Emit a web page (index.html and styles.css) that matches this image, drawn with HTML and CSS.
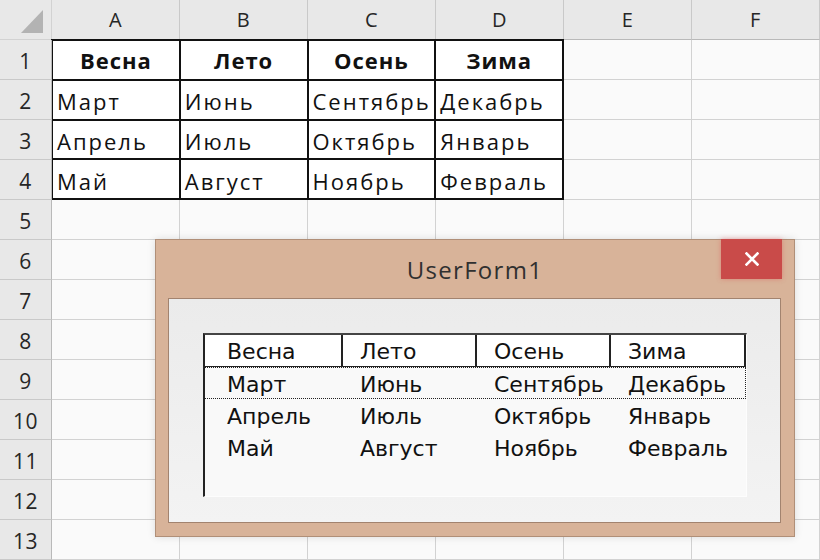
FILE: index.html
```html
<!DOCTYPE html>
<html lang="ru">
<head>
<meta charset="utf-8">
<title>UserForm1</title>
<link rel="stylesheet" href="styles.css">
</head>
<body>
<div class="sheet">
  <div class="corner"><svg width="52" height="40" viewBox="0 0 52 40"><polygon points="21,33 43,33 43,10" fill="#b3b3b3"/></svg></div>
  <div class="colh">A</div><div class="colh">B</div><div class="colh">C</div><div class="colh">D</div><div class="colh">E</div><div class="colh">F</div>

  <div class="data">
    <div class="hd">Весна</div><div class="hd">Лето</div><div class="hd">Осень</div><div class="hd">Зима</div>
    <div>Март</div><div>Июнь</div><div>Сентябрь</div><div>Декабрь</div>
    <div>Апрель</div><div>Июль</div><div>Октябрь</div><div>Январь</div>
    <div>Май</div><div>Август</div><div>Ноябрь</div><div>Февраль</div>
  </div>

  <div class="rowh">1</div><div class="cell"></div><div class="cell"></div>
  <div class="rowh">2</div><div class="cell"></div><div class="cell"></div>
  <div class="rowh">3</div><div class="cell"></div><div class="cell"></div>
  <div class="rowh">4</div><div class="cell"></div><div class="cell"></div>
  <div class="rowh">5</div><div class="cell"></div><div class="cell"></div><div class="cell"></div><div class="cell"></div><div class="cell"></div><div class="cell"></div>
  <div class="rowh">6</div><div class="cell"></div><div class="cell"></div><div class="cell"></div><div class="cell"></div><div class="cell"></div><div class="cell"></div>
  <div class="rowh">7</div><div class="cell"></div><div class="cell"></div><div class="cell"></div><div class="cell"></div><div class="cell"></div><div class="cell"></div>
  <div class="rowh">8</div><div class="cell"></div><div class="cell"></div><div class="cell"></div><div class="cell"></div><div class="cell"></div><div class="cell"></div>
  <div class="rowh">9</div><div class="cell"></div><div class="cell"></div><div class="cell"></div><div class="cell"></div><div class="cell"></div><div class="cell"></div>
  <div class="rowh">10</div><div class="cell"></div><div class="cell"></div><div class="cell"></div><div class="cell"></div><div class="cell"></div><div class="cell"></div>
  <div class="rowh">11</div><div class="cell"></div><div class="cell"></div><div class="cell"></div><div class="cell"></div><div class="cell"></div><div class="cell"></div>
  <div class="rowh">12</div><div class="cell"></div><div class="cell"></div><div class="cell"></div><div class="cell"></div><div class="cell"></div><div class="cell"></div>
  <div class="rowh">13</div><div class="cell"></div><div class="cell"></div><div class="cell"></div><div class="cell"></div><div class="cell"></div><div class="cell"></div>
</div>

<div class="dialog">
  <div class="titlebar">
    <span class="title">UserForm1</span>
    <div class="close"><svg width="14" height="14" viewBox="0 0 14 14"><path d="M1.5 1.5 L12.5 12.5 M12.5 1.5 L1.5 12.5" stroke="#fff" stroke-width="2.6" stroke-linecap="square"/></svg></div>
  </div>
  <div class="client">
    <div class="listbox">
      <div class="lb-head"><span>Весна</span><span>Лето</span><span>Осень</span><span>Зима</span></div>
      <div class="lb-row sel"><span>Март</span><span>Июнь</span><span>Сентябрь</span><span>Декабрь</span></div>
      <div class="lb-row"><span>Апрель</span><span>Июль</span><span>Октябрь</span><span>Январь</span></div>
      <div class="lb-row"><span>Май</span><span>Август</span><span>Ноябрь</span><span>Февраль</span></div>
    </div>
  </div>
</div>
</body>
</html>
```

FILE: styles.css
```css
html, body {
  margin: 0;
  padding: 0;
}
body {
  width: 820px;
  height: 560px;
  overflow: hidden;
  position: relative;
  background: #fafafa;
  font-family: "Open Sans", "Noto Sans", sans-serif;
  color: #111;
}

.sheet {
  display: grid;
  grid-template-columns: 52px repeat(6, 128px);
  grid-template-rows: repeat(14, 40px);
}
.sheet > div {
  box-sizing: border-box;
  border-right: 1px solid #d2d2d2;
  border-bottom: 1px solid #d2d2d2;
}
.corner {
  background: #e8e8e8;
}
.corner svg {
  display: block;
}
.sheet > .colh {
  background: #e8e8e8;
  border-right-color: #c9c9c9;
  border-bottom-color: #b9b9b9;
  display: flex;
  align-items: center;
  justify-content: center;
  font-size: 20px;
  letter-spacing: 0.5px;
  color: #262626;
}
.sheet > .rowh {
  background: #e8e8e8;
  border-right-color: #b9b9b9;
  border-bottom-color: #c9c9c9;
  display: flex;
  align-items: center;
  justify-content: center;
  font-size: 21px;
  letter-spacing: 0.5px;
  padding-top: 2px;
  color: #262626;
}
.cell {
  background: #fafafa;
}

.sheet > .data {
  grid-column: 2 / 6;
  grid-row: 2 / 6;
  margin: -1px 0 0 -1px;
  display: grid;
  grid-template-columns: repeat(4, 1fr);
  grid-template-rows: repeat(4, 1fr);
  border-left: 2px solid #111;
  border-top: 2px solid #111;
  border-right: none;
  border-bottom: none;
  background: #fff;
}
.data > div {
  box-sizing: border-box;
  border-right: 2px solid #111;
  border-bottom: 2px solid #111;
  display: flex;
  align-items: center;
  padding: 3px 0 0 4px;
  font-size: 22px;
  letter-spacing: 2px;
  color: #111;
  white-space: nowrap;
}
.data > .hd {
  justify-content: center;
  padding: 1px 0 0 0;
  font-weight: bold;
  letter-spacing: 1px;
}

.dialog {
  position: absolute;
  left: 155px;
  top: 239px;
  width: 640px;
  height: 298px;
  box-sizing: border-box;
  background: #d8b399;
  border: 1px solid #b08f78;
  display: flex;
  flex-direction: column;
  box-shadow: 0 0 8px rgba(0, 0, 0, 0.12);
}
.titlebar {
  height: 58px;
  flex: none;
  display: flex;
  align-items: center;
  justify-content: center;
  position: relative;
}
.title {
  font-size: 24px;
  letter-spacing: 1.3px;
  color: #303030;
}
.close {
  position: absolute;
  right: 12px;
  top: -1px;
  width: 61px;
  height: 40px;
  background: #c94b49;
  display: flex;
  align-items: center;
  justify-content: center;
  box-shadow: 0 0 5px rgba(220, 80, 80, 0.45);
}
.close svg {
  display: block;
}
.client {
  flex: 1;
  margin: 0 13px 13px 12px;
  background: linear-gradient(#ebebeb, #f3f3f3);
  border: 1px solid #a2836f;
  padding: 34px 0 0 34px;
}
.listbox {
  width: 544px;
  height: 164px;
  box-sizing: border-box;
  border-left: 2px solid #222;
  border-top: 2px solid #444;
  border-right: 1px solid #fdfdfd;
  border-bottom: 1px solid #fdfdfd;
  background: #f9f9f9;
  font-family: "DejaVu Sans", sans-serif;
  font-size: 22px;
  color: #111;
}
.lb-head,
.lb-row {
  display: grid;
  grid-template-columns: 138px 134px 134px 1fr;
  align-items: center;
  white-space: nowrap;
}
.lb-head {
  height: 32px;
  box-sizing: border-box;
  background: #fff;
  border-bottom: 1px solid #222;
}
.lb-head > span {
  box-sizing: border-box;
  height: 100%;
  display: flex;
  align-items: center;
  padding-top: 2px;
  border-right: 2px solid #222;
}
.lb-head > span,
.lb-row > span {
  padding-left: 17px;
}
.lb-head > span:first-child,
.lb-row > span:first-child {
  padding-left: 22px;
}
.lb-row {
  height: 32px;
  box-sizing: border-box;
  padding-top: 2px;
}
.lb-row.sel {
  border: 1px dotted #222;
  margin-left: -1px;
}
```
